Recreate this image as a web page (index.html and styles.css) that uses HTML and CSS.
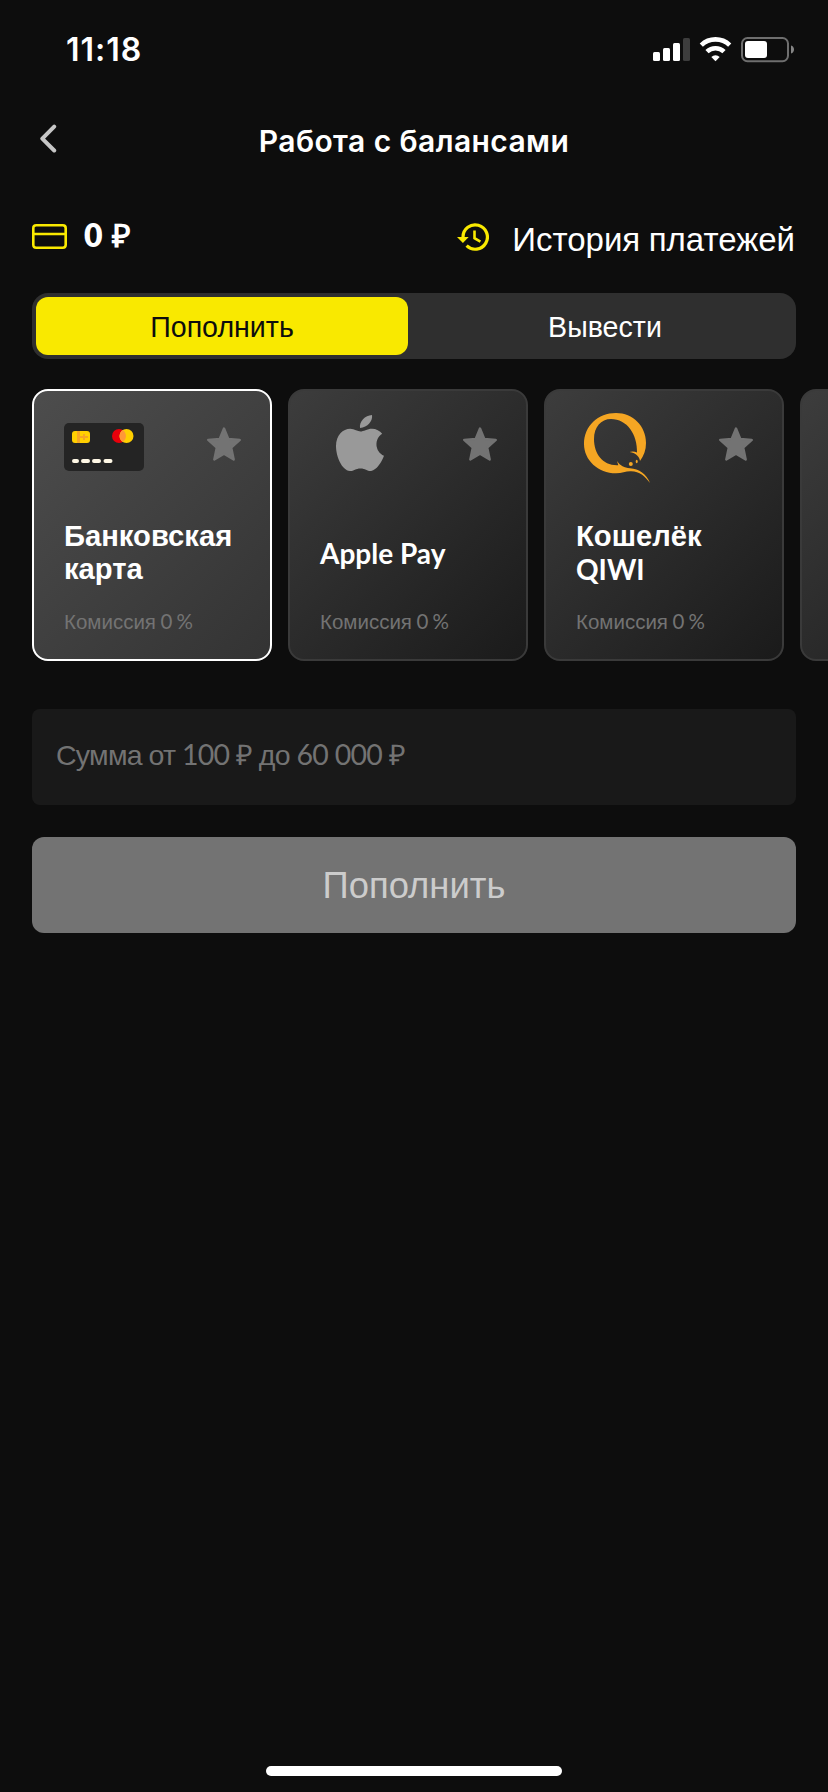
FILE: index.html
```html
<!DOCTYPE html>
<html lang="ru">
<head>
<meta charset="utf-8">
<title>Работа с балансами</title>
<link rel="stylesheet" href="styles.css">
</head>
<body>
<svg class="defs" width="0" height="0">
  <symbol id="star" viewBox="0 0 36 36">
    <path d="M18 2.500l4.300 10.400 11.500 1-8.600 7.600 2.500 12-9.700-5.800-9.700 5.800 2.500-12-8.600-7.600 11.500-1z" fill="#737373" stroke="#737373" stroke-width="2.400" stroke-linejoin="round"/>
  </symbol>
</svg>
<div class="screen">
  <div class="status">
    <span class="time">11:18</span>
    <svg class="indicators" width="142" height="26" viewBox="0 0 142 26">
      <g fill="#fff">
        <rect x="0" y="15" width="7" height="9" rx="1.500"/>
        <rect x="10" y="11" width="7" height="13" rx="1.500"/>
        <rect x="20" y="6" width="7" height="18" rx="1.500"/>
        <rect x="30" y="1" width="7" height="23" rx="1.500" fill="#3d3d3d"/>
        <path d="M62.500 24.200l-4.200-4.300a6.200 6.200 0 0 1 8.400 0z"/>
      </g>
      <g fill="none" stroke="#fff" stroke-width="4.600">
        <path d="M48.300 8.100a20.500 20.500 0 0 1 28.400 0"/>
        <path d="M54 14.600a12.300 12.300 0 0 1 17 0"/>
      </g>
      <rect x="89" y="1" width="46" height="23.200" rx="5.500" fill="none" stroke="#6e6e6e" stroke-width="2"/>
      <rect x="92" y="4" width="22" height="17" rx="3" fill="#fff"/>
      <path d="M138 8.500c4 1 4 7 0 8z" fill="#858585"/>
    </svg>
  </div>

  <header class="nav">
    <svg class="back" width="20" height="30" viewBox="0 0 20 30"><path d="M15.200 2.600L3.300 14.600l11.900 11.900" fill="none" stroke="#c6c6c6" stroke-width="4" stroke-linecap="round" stroke-linejoin="round"/></svg>
    <h1 class="title">Работа с балансами</h1>
  </header>

  <div class="balance">
    <svg class="wallet" width="35" height="25" viewBox="0 0 35 25"><path d="M1.300 4.200q0-2.900 2.900-2.900h26.600q2.900 0 2.900 2.900v16.600q0 2.900-2.900 2.900H4.200q-2.900 0-2.900-2.900zM1.300 10h32.400" fill="none" stroke="#f9e900" stroke-width="2.600"/></svg>
    <span class="amount">0 ₽</span>
    <svg class="history" width="32" height="28" viewBox="0 0 32 28">
      <path d="M6 14A12.200 12.200 0 1 1 9.600 22.700" fill="none" stroke="#f9e900" stroke-width="3.200"/>
      <path d="M0 14h11.700l-5.800 6z" fill="#f9e900"/>
      <path d="M17.500 7.500v7.700l5.900 3.400" fill="none" stroke="#f9e900" stroke-width="2.600"/>
    </svg>
    <span class="history-label">История<span class="latin"> </span>платежей</span>
  </div>

  <div class="segments">
    <div class="segment active">Пополнить</div>
    <div class="segment withdraw">Вывести</div>
  </div>

  <div class="methods">
    <div class="method selected">
      <div class="method-top">
        <svg width="80" height="72" viewBox="0 0 80 72">
          <rect y="12" width="80" height="48" rx="5" fill="#242424"/>
          <rect x="8" y="20" width="18" height="12" rx="3" fill="#ffcf00"/>
          <path d="M13 20h3v12h-3zM16 25h8v2h-8zM19 23h2v6h-2z" fill="#f5a623"/>
          <circle cx="55" cy="25" r="7" fill="#e8000b"/>
          <circle cx="62.500" cy="25" r="7" fill="#ffcf00"/>
          <path d="M58.750 19.100a7 7 0 0 1 0 11.800 7 7 0 0 1 0-11.800z" fill="#ff9838"/>
          <path d="M10 50h3M19 50h5M30 50h5M41.500 50h5" stroke="#fff8e6" stroke-width="4" stroke-linecap="round"/>
        </svg>
        <svg class="star" width="36" height="36"><use href="#star"/></svg>
      </div>
      <div class="name">Банковская<br>карта</div>
      <div class="fee">Комиссия<span class="latin"> 0 %</span></div>
    </div>
    <div class="method">
      <div class="method-top">
        <svg width="80" height="72" viewBox="0 0 80 72">
          <path d="M40 17C39 10.500 45 4.500 52 4c1 6-4.500 12.500-12 13z" fill="#999"/>
          <path d="M40.500 20.500c3 0 6.500-2.800 11.500-2.800 4 0 8 2 10.200 5.100-8.200 5-7.500 18 1.800 22-2 6-7.500 14.500-12.800 15.200-4 .3-5.700-2.500-10.700-2.500s-7 2.800-10.700 2.500C22 59.300 16 46 16 35c0-11 7-17.300 14.300-17.300 4.200 0 7.500 2.800 10.200 2.800z" fill="#999"/>
        </svg>
        <svg class="star" width="36" height="36"><use href="#star"/></svg>
      </div>
      <div class="name"><span class="latin">Apple Pay</span></div>
      <div class="fee">Комиссия<span class="latin"> 0 %</span></div>
    </div>
    <div class="method">
      <div class="method-top">
        <svg width="80" height="76" viewBox="0 0 80 76">
          <g fill="#f5a623">
            <path d="M40 2C57 2 70 15 70 32c0 7-2 12.500-6 18-.5-4-3.500-8-10.500-9 2-.8 5-.8 7.500.5.600-18-10-33.500-26-33.500-10 0-17 8-17 20 0 15 9 27 24.300 26.200L41 50c3.500 5 7 6.500 13 7.300 9 .8 16.500 5.500 20 14.700-5.500-7-10-11.500-19-11.700-5-.2-9 2-15 2C22 62.300 8 49 8 33 8 15 22 2 40 2z"/>
            <circle cx="54.800" cy="53" r="2"/>
            <ellipse cx="60.700" cy="50.500" rx="1" ry="1.700"/>
          </g>
        </svg>
        <svg class="star" width="36" height="36"><use href="#star"/></svg>
      </div>
      <div class="name"><span>Кошелёк<br><span class="latin">QIWI</span></span></div>
      <div class="fee">Комиссия<span class="latin"> 0 %</span></div>
    </div>
    <div class="method"></div>
  </div>

  <div class="field"><span>Сумма<span class="latin"> </span>от<span class="latin"> 100 ₽ </span>до<span class="latin"> 60 000 ₽</span></span></div>
  <div class="submit">Пополнить</div>

  <div class="home"></div>
</div>
</body>
</html>
```
FILE: styles.css
```css
* { box-sizing: border-box; }
body {
  margin: 0;
  background: #0d0d0d;
  color: #fff;
  font-family: "Liberation Sans", Arial, sans-serif;
}
.defs { position: absolute; }
.screen {
  display: flex;
  flex-direction: column;
  width: 828px;
  height: 1792px;
  padding: 0 32px;
  overflow: hidden;
}
span { white-space: nowrap; }
svg { flex: none; display: block; }
.latin { font-family: Lato, sans-serif; }
.status {
  display: flex;
  justify-content: space-between;
  align-items: flex-start;
  padding: 30px 1px 0 34px;
  height: 104px;
}
.time {
  font: 600 32px/40px Inter, sans-serif;
  letter-spacing: 1px;
}
.indicators { margin-top: 7px; }
.nav {
  display: grid;
  grid-template-columns: 40px 1fr 40px;
  height: 104px;
  padding-top: 20px;
}
.back { margin: 0 0 0 7px; }
.title {
  margin: -3px 0 0;
  text-align: center;
  font: 600 30px/40px Inter, sans-serif;
  letter-spacing: 0.4px;
}
.balance {
  display: flex;
  align-items: flex-start;
  height: 85px;
}
.wallet { margin-top: 16px; }
.amount {
  margin: 7px 0 0 17px;
  font: 800 32px/40px Lato, sans-serif;
  letter-spacing: 1px;
}
.history { margin: 15px 23px 0 auto; }
.history-label {
  margin: 10px 1px 0 0;
  font-size: 33px;
  line-height: 40px;
}
.segments {
  display: grid;
  grid-template-columns: 372px 1fr;
  height: 66px;
  padding: 4px;
  border-radius: 16px;
  background: #2f2f2f;
}
.segment {
  display: flex;
  justify-content: center;
  align-items: center;
  padding-top: 2px;
  font-size: 28.6px;
  line-height: 56px;
  border-radius: 12px;
}
.active { background: #f9e900; color: #0d0d0d; }
.withdraw { padding-left: 10px; }
.methods {
  display: flex;
  gap: 16px;
  margin: 30px -32px 0 0;
  overflow: hidden;
}
.method {
  flex: none;
  display: flex;
  flex-direction: column;
  width: 240px;
  height: 272px;
  padding: 20px 28px 0 30px;
  border: 2px solid #3a3a3a;
  border-radius: 16px;
  background: linear-gradient(135deg, #3d3d3d, #1a1a1a) border-box;
}
.selected {
  border-color: #fff;
  background: linear-gradient(135deg, #4d4d4d, #333) border-box;
}
.method-top {
  display: flex;
  justify-content: space-between;
  height: 104px;
}
.star { margin-top: 15px; }
.name {
  display: flex;
  flex-direction: column;
  justify-content: center;
  height: 76px;
  font: 700 29.2px/33px "Liberation Sans", Arial, sans-serif;
}
.name .latin { font-size: 28px; }
.fee {
  margin-top: 18px;
  font: 20.5px/24px "Liberation Sans", Arial, sans-serif;
  color: #737373;
  white-space: nowrap;
}
.fee .latin { letter-spacing: -0.6px; }
.field {
  display: flex;
  align-items: center;
  height: 96px;
  margin-top: 48px;
  padding: 0 24px 6px;
  border-radius: 8px;
  background: #191919;
  color: #737373;
  font-size: 28.5px;
  line-height: 36px;
  letter-spacing: -0.72px;
}
.submit {
  display: flex;
  align-items: center;
  justify-content: center;
  height: 96px;
  margin-top: 32px;
  padding-top: 2px;
  border-radius: 12px;
  background: #737373;
  color: #ccc;
  font-size: 36.4px;
}
.home {
  width: 296px;
  height: 10px;
  margin: auto auto 16px;
  border-radius: 5px;
  background: #fff;
}
```
